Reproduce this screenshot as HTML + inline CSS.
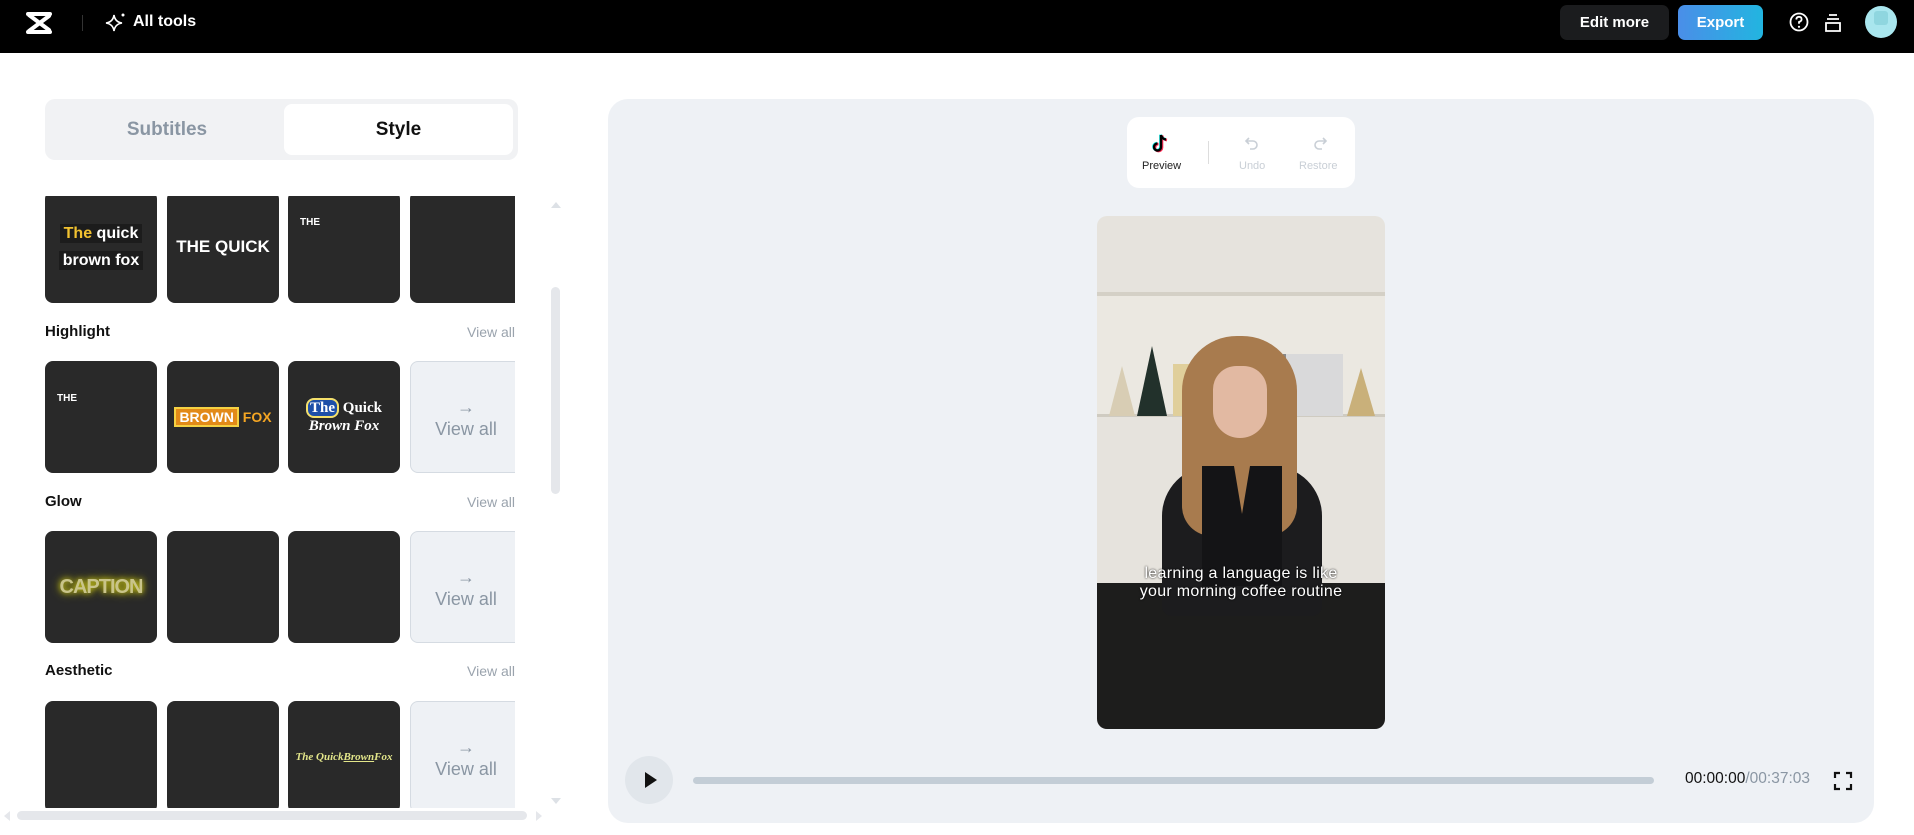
<!DOCTYPE html>
<html><head><meta charset="utf-8"><style>
*{box-sizing:border-box;margin:0;padding:0}
body{width:1914px;height:835px;overflow:hidden;background:#fff;font-family:"Liberation Sans",sans-serif;position:relative}
.abs{position:absolute}
.hdr{left:0;top:0;width:1914px;height:53px;background:#000}
.btn{top:5px;height:35px;border-radius:7px;color:#fff;font-weight:bold;font-size:15px;display:flex;align-items:center;justify-content:center}
.tabs{left:45px;top:99px;width:473px;height:61px;background:#f1f2f4;border-radius:10px}
.tab{top:5px;height:51px;border-radius:8px;display:flex;align-items:center;justify-content:center;font-size:19px;font-weight:bold}
.list{left:45px;top:196px;width:470px;height:612px;overflow:hidden}
.th{position:absolute;width:112px;height:112px;background:#292929;border-radius:8px;overflow:hidden;color:#fff;display:flex;align-items:center;justify-content:center;font-weight:bold}
.va{position:absolute;width:112px;height:112px;background:#eef1f5;border:1px solid #d5dbe2;border-radius:8px;color:#8a96a3;font-size:18px;text-align:center;padding-top:34px;line-height:22px}
.lbl{position:absolute;left:0;font-size:15px;font-weight:bold;color:#111}
.vl{position:absolute;right:0;font-size:14px;color:#9aa3ad}
.panel{left:608px;top:99px;width:1266px;height:724px;background:#eef1f5;border-radius:20px}
</style></head><body>
<div class="abs hdr"></div>
<svg class="abs" style="left:24px;top:10px" width="30" height="26" viewBox="0 0 30 26"><path d="M4 4 H26 M4 22 H26 M5 5 L25 20 M25 6 L5 21" stroke="#fff" stroke-width="4" fill="none" stroke-linecap="round"/></svg>
<div class="abs" style="left:82px;top:15px;width:1px;height:16px;background:#333"></div>
<svg class="abs" style="left:105px;top:11px" width="22" height="22" viewBox="0 0 22 22"><path d="M9 4 Q10 11 17 12 Q10 13 9 20 Q8 13 1 12 Q8 11 9 4Z" stroke="#fff" stroke-width="1.6" fill="none"/><circle cx="18" cy="4" r="1.5" fill="#fff"/></svg>
<div class="abs" style="left:133px;top:13px;color:#fff;font-size:16px;font-weight:bold">All tools</div>
<div class="abs btn" style="left:1560px;width:109px;background:#1b1c1e">Edit more</div>
<div class="abs btn" style="left:1678px;width:85px;background:linear-gradient(90deg,#4a8ee8,#22b5e0)">Export</div>
<svg class="abs" style="left:1788px;top:11px" width="22" height="22" viewBox="0 0 22 22"><circle cx="11" cy="11" r="8.5" stroke="#fff" stroke-width="1.8" fill="none"/><path d="M8.3 8.5 Q8.5 5.8 11 5.8 Q13.6 5.8 13.6 8.2 Q13.6 10 11 11 L11 12.8" stroke="#fff" stroke-width="1.8" fill="none"/><circle cx="11" cy="15.8" r="1.1" fill="#fff"/></svg>
<svg class="abs" style="left:1823px;top:12px" width="20" height="22" viewBox="0 0 20 22"><path d="M6 3H14M4 7H16M3 11H17V19H3Z" stroke="#fff" stroke-width="1.8" fill="none"/></svg>
<div class="abs" style="left:1865px;top:6px;width:32px;height:32px;border-radius:50%;background:#a9e6ee;overflow:hidden"><div style="position:absolute;left:9px;top:5px;width:14px;height:14px;background:#8fd6df;border-radius:3px"></div></div>

<div class="abs tabs">
<div class="abs tab" style="left:5px;width:234px;color:#8a96a3">Subtitles</div>
<div class="abs tab" style="left:239px;width:229px;background:#fff;color:#111">Style</div>
</div>

<div class="abs list">
<div class="th" style="left:0;top:-5px"><div style="text-align:center;font-size:16px;line-height:27px"><span style="background:#1c1c1c;padding:1px 4px"><span style="color:#f2c230">The</span> quick</span><br><span style="background:#1c1c1c;padding:1px 4px">brown fox</span></div></div>
<div class="th" style="left:122px;top:-5px;font-size:17px">THE QUICK</div>
<div class="th" style="left:243px;top:-5px;align-items:flex-start;justify-content:flex-start;padding:26px 12px;font-size:10px">THE</div>
<div class="th" style="left:365px;top:-5px"></div>

<div class="lbl" style="top:127px">Highlight</div><div class="vl" style="top:128px">View all</div>
<div class="th" style="left:0;top:165px;align-items:flex-start;justify-content:flex-start;padding:32px 12px;font-size:10px">THE</div>
<div class="th" style="left:122px;top:165px;font-size:14px"><span style="background:#e28a18;border:2px solid #f5d142;padding:0 3px">BROWN</span>&nbsp;<span style="color:#f5a623">FOX</span></div>
<div class="th" style="left:243px;top:165px;font-family:'Liberation Serif',serif;font-size:15px;text-align:center;line-height:18px"><div><span style="background:#1e4fa8;border:2px solid #f5e06a;border-radius:8px;padding:0 2px">The</span> Quick<br><i>Brown Fox</i></div></div>
<div class="va" style="left:365px;top:165px">→<br>View all</div>

<div class="lbl" style="top:297px">Glow</div><div class="vl" style="top:298px">View all</div>
<div class="th" style="left:0;top:335px;font-size:20px;color:#c9c48a;text-shadow:0 0 6px #d6d21a,0 0 10px #a9a500;letter-spacing:-1px">CAPTION</div>
<div class="th" style="left:122px;top:335px"></div>
<div class="th" style="left:243px;top:335px"></div>
<div class="va" style="left:365px;top:335px">→<br>View all</div>

<div class="lbl" style="top:466px">Aesthetic</div><div class="vl" style="top:467px">View all</div>
<div class="th" style="left:0;top:505px"></div>
<div class="th" style="left:122px;top:505px"></div>
<div class="th" style="left:243px;top:505px;color:#e3e68a;font-style:italic;font-size:11px;font-family:'Liberation Serif',serif">The Quick <u>Brown</u> Fox</div>
<div class="va" style="left:365px;top:505px">→<br>View all</div>
</div>
<div class="abs" style="left:551px;top:202px;width:0;height:0;border-left:5px solid transparent;border-right:5px solid transparent;border-bottom:6px solid #dde1e6"></div>
<div class="abs" style="left:551px;top:287px;width:9px;height:207px;background:#e5e7eb;border-radius:5px"></div>
<div class="abs" style="left:551px;top:798px;width:0;height:0;border-left:5px solid transparent;border-right:5px solid transparent;border-top:6px solid #dde1e6"></div>
<div class="abs" style="left:17px;top:811px;width:510px;height:9px;background:#e5e7eb;border-radius:5px"></div>
<div class="abs" style="left:4px;top:811px;width:0;height:0;border-top:5px solid transparent;border-bottom:5px solid transparent;border-right:6px solid #e5e7eb"></div>
<div class="abs" style="left:536px;top:811px;width:0;height:0;border-top:5px solid transparent;border-bottom:5px solid transparent;border-left:6px solid #e5e7eb"></div>

<div class="abs panel"></div>
<div class="abs" style="left:1127px;top:117px;width:228px;height:71px;background:#fff;border-radius:12px"></div>
<svg class="abs" style="left:1152px;top:133px" width="18" height="20" viewBox="0 0 18 20"><path d="M9 2 V14 A3.5 3.5 0 1 1 5.5 10.5 M9 2 Q10 6 14 6.5" stroke="#fe2c55" stroke-width="2.6" fill="none" transform="translate(1,0.6)"/><path d="M9 2 V14 A3.5 3.5 0 1 1 5.5 10.5 M9 2 Q10 6 14 6.5" stroke="#25f4ee" stroke-width="2.6" fill="none" transform="translate(-0.6,-0.4)"/><path d="M9 2 V14 A3.5 3.5 0 1 1 5.5 10.5 M9 2 Q10 6 14 6.5" stroke="#000" stroke-width="2.4" fill="none"/></svg>
<div class="abs" style="left:1142px;top:160px;font-size:11px;color:#222">Preview</div>
<div class="abs" style="left:1208px;top:141px;width:1px;height:23px;background:#ddd"></div>
<svg class="abs" style="left:1244px;top:135px" width="16" height="16" viewBox="0 0 16 16"><path d="M5 3 L2 6 L5 9 M2 6 H9 A4 4 0 0 1 9 14 H6" stroke="#c9cfd6" stroke-width="1.6" fill="none"/></svg>
<div class="abs" style="left:1239px;top:160px;font-size:11px;color:#c9cfd6">Undo</div>
<svg class="abs" style="left:1312px;top:135px" width="16" height="16" viewBox="0 0 16 16"><path d="M11 3 L14 6 L11 9 M14 6 H7 A4 4 0 0 0 7 14 H10" stroke="#c9cfd6" stroke-width="1.6" fill="none"/></svg>
<div class="abs" style="left:1299px;top:160px;font-size:11px;color:#c9cfd6">Restore</div>

<div class="abs" style="left:1097px;top:216px;width:288px;height:513px;border-radius:10px;overflow:hidden;background:#e6e3dd">
 <div class="abs" style="left:0;top:76px;width:288px;height:4px;background:#d4d0c6"></div>
 <div class="abs" style="left:0;top:80px;width:288px;height:120px;background:#ebe8e1"></div>
 <div class="abs" style="left:0;top:198px;width:288px;height:3px;background:#cfcbc1"></div>
 <div class="abs" style="left:40px;top:130px;width:30px;height:70px;background:#22312b;clip-path:polygon(50% 0,100% 100%,0 100%)"></div>
 <div class="abs" style="left:12px;top:150px;width:26px;height:50px;background:#d8cdb4;clip-path:polygon(50% 0,100% 100%,0 100%)"></div>
 <div class="abs" style="left:76px;top:148px;width:16px;height:52px;background:#e0cf9b"></div>
 <div class="abs" style="left:186px;top:138px;width:60px;height:62px;background:#d9d9da;border-left:3px solid #888"></div>
 <div class="abs" style="left:250px;top:152px;width:28px;height:48px;background:#c9b07a;clip-path:polygon(50% 0,100% 100%,0 100%)"></div>
 <div class="abs" style="left:0;top:367px;width:288px;height:146px;background:#1d1d1c"></div>
 <div class="abs" style="left:65px;top:250px;width:160px;height:150px;background:#1c1c1e;border-radius:50px 50px 10px 10px"></div>
 <div class="abs" style="left:85px;top:120px;width:115px;height:200px;background:#a87b4e;border-radius:55px 55px 30px 30px"></div>
 <div class="abs" style="left:116px;top:150px;width:54px;height:72px;background:#e2b9a2;border-radius:26px 26px 30px 30px"></div>
 <div class="abs" style="left:105px;top:250px;width:80px;height:120px;background:#141416;clip-path:polygon(0 0,40% 0,50% 40%,60% 0,100% 0,100% 100%,0 100%)"></div>
 <div class="abs" style="left:0;top:349px;width:288px;text-align:center;color:#fff;font-size:16px;line-height:18px;letter-spacing:0.3px;text-shadow:0 0 2px #000">learning a language is like<br>your morning coffee routine</div>
</div>

<div class="abs" style="left:625px;top:756px;width:48px;height:48px;border-radius:50%;background:#e1e6eb"></div>
<div class="abs" style="left:645px;top:772px;width:0;height:0;border-top:8px solid transparent;border-bottom:8px solid transparent;border-left:12px solid #111"></div>
<div class="abs" style="left:693px;top:777px;width:961px;height:7px;border-radius:4px;background:#c3cdd6"></div>
<div class="abs" style="left:1685px;top:770px;font-size:15.5px;color:#111">00:00:00<span style="color:#8a96a3">/00:37:03</span></div>
<svg class="abs" style="left:1833px;top:771px" width="20" height="20" viewBox="0 0 20 20"><path d="M2 7V2H7M13 2H18V7M18 13V18H13M7 18H2V13" stroke="#111" stroke-width="2.2" fill="none"/></svg>
</body></html>
